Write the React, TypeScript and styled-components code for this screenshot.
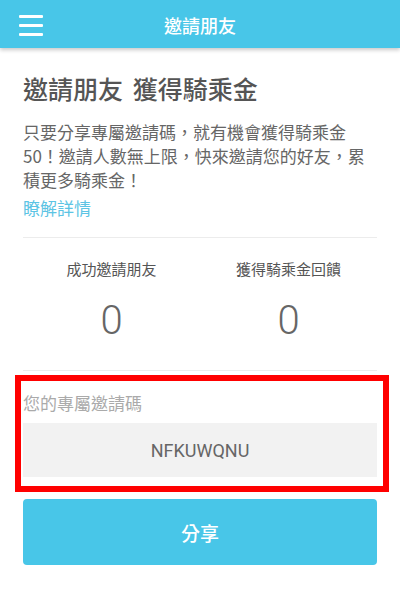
import React from "react";
import styled, { createGlobalStyle } from "styled-components";

const Global = createGlobalStyle`
  html, body { margin: 0; padding: 0; background: #ffffff; }
  body {
    font-family: "Noto Sans CJK TC", "Noto Sans", Roboto, sans-serif;
    -webkit-font-smoothing: antialiased;
  }
  * { box-sizing: border-box; }
`;

const Page = styled.div`
  width: 400px;
  min-height: 596px;
  background: #fff;
`;

const Header = styled.header`
  position: relative;
  height: 48px;
  background: #48c6e8;
  box-shadow: 0 2px 4px rgba(0, 0, 0, 0.22);
  display: flex;
  align-items: center;
  justify-content: center;
`;

const MenuButton = styled.button`
  position: absolute;
  left: 19px;
  top: 15px;
  width: 24px;
  height: 21px;
  padding: 0;
  border: 0;
  background: transparent;
  display: flex;
  flex-direction: column;
  justify-content: space-between;
  span {
    display: block;
    height: 3px;
    border-radius: 1px;
    background: #fff;
  }
`;

const HeaderTitle = styled.h1`
  margin: 0;
  color: #fff;
  font-size: 18px;
  font-weight: 500;
  line-height: 24px;
  margin-top: 2px;
`;

const Main = styled.main`
  padding: 0 23px;
`;

const Heading = styled.h2`
  margin: 24px 0 0;
  font-size: 25px;
  line-height: 32px;
  font-weight: 500;
  color: #555;
  word-spacing: 4px;
`;

const Intro = styled.p`
  margin: 16px 0 0;
  font-size: 17px;
  line-height: 24px;
  color: #666;
  font-weight: 400;
`;

const MoreLink = styled.a`
  display: block;
  margin-top: 4px;
  font-size: 17px;
  line-height: 24px;
  color: #5cc4e4;
  text-decoration: none;
`;

const Divider = styled.hr<{ $top: number }>`
  margin: ${(p) => p.$top}px 0 0;
  border: 0;
  height: 1px;
  background: #ececec;
`;

const Stats = styled.section`
  display: grid;
  grid-template-columns: 1fr 1fr;
  padding-top: 21px;
`;

const Stat = styled.div`
  display: flex;
  flex-direction: column;
  align-items: center;
`;

const StatLabel = styled.div`
  font-size: 15px;
  line-height: 20px;
  color: #555;
`;

const StatValue = styled.div`
  margin-top: 18px;
  font-family: Roboto, "Noto Sans", sans-serif;
  font-weight: 300;
  font-size: 40px;
  line-height: 48px;
  color: #666;
`;

const CodeSection = styled.section`
  position: relative;
  margin-top: 20px;
`;

const CodeLabel = styled.div`
  font-size: 17px;
  line-height: 24px;
  color: #aaa;
`;

const CodeBox = styled.div`
  margin-top: 8px;
  height: 54px;
  background: #f2f2f2;
  display: flex;
  align-items: center;
  justify-content: center;
  font-family: Roboto, "Noto Sans", sans-serif;
  font-size: 18px;
  font-weight: 400;
  color: #666;
`;

const Highlight = styled.div`
  position: absolute;
  top: -16px;
  left: -8px;
  right: -12px;
  bottom: -15px;
  border: 6px solid #ff0000;
  pointer-events: none;
`;

const ShareButton = styled.button`
  display: flex;
  align-items: center;
  justify-content: center;
  width: 100%;
  height: 66px;
  margin-top: 22px;
  border: 0;
  border-radius: 4px;
  background: #48c6e8;
  color: #fff;
  font-family: "Noto Sans CJK TC", sans-serif;
  font-size: 19px;
  font-weight: 500;
`;

export default function App() {
  const stats = [
    { label: "成功邀請朋友", value: 0 },
    { label: "獲得騎乘金回饋", value: 0 },
  ];
  return (
    <Page>
      <Global />
      <Header>
        <MenuButton aria-label="menu">
          <span />
          <span />
          <span />
        </MenuButton>
        <HeaderTitle>邀請朋友</HeaderTitle>
      </Header>
      <Main>
        <Heading>邀請朋友 獲得騎乘金</Heading>
        <Intro>
          只要分享專屬邀請碼，就有機會獲得騎乘金50！邀請人數無上限，快來邀請您的好友，累積更多騎乘金！
        </Intro>
        <MoreLink href="#">瞭解詳情</MoreLink>
        <Divider $top={17} />
        <Stats>
          {stats.map((s) => (
            <Stat key={s.label}>
              <StatLabel>{s.label}</StatLabel>
              <StatValue>{s.value}</StatValue>
            </Stat>
          ))}
        </Stats>
        <Divider $top={25} />
        <CodeSection>
          <CodeLabel>您的專屬邀請碼</CodeLabel>
          <CodeBox>NFKUWQNU</CodeBox>
          <Highlight />
        </CodeSection>
        <ShareButton>分享</ShareButton>
      </Main>
    </Page>
  );
}
